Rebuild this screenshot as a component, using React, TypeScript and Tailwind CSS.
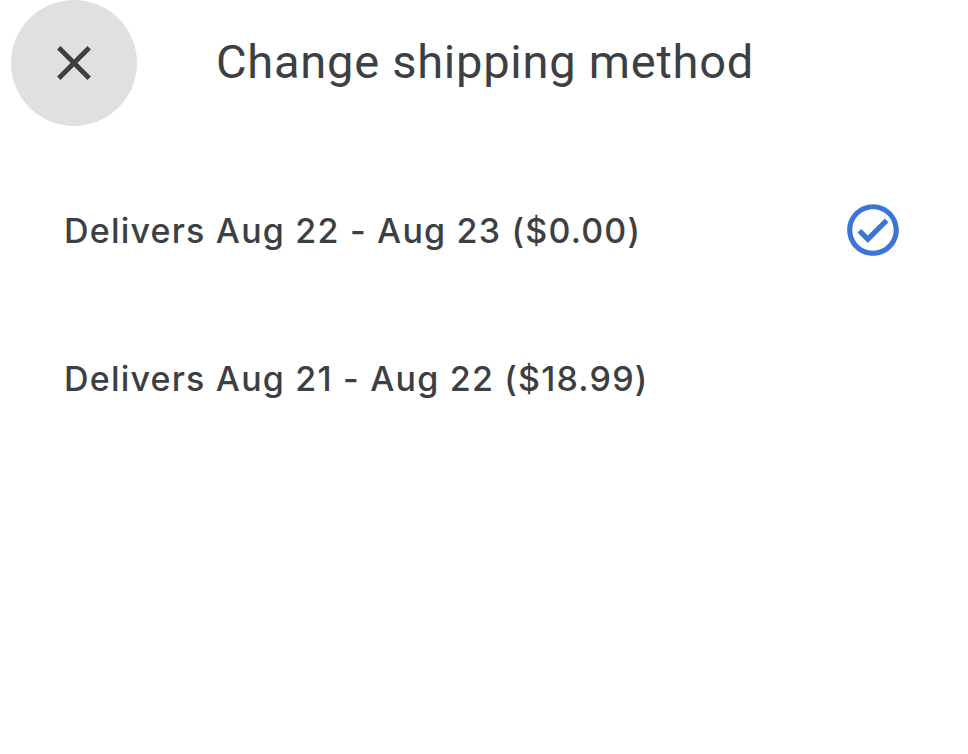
import React from "react";

const options = [
  { label: "Delivers Aug 22 - Aug 23 ($0.00)", selected: true },
  { label: "Delivers Aug 21 - Aug 22 ($18.99)", selected: false },
];

function CheckCircle() {
  return (
    <svg width="62" height="62" viewBox="0 0 24 24" fill="#3a76d6">
      <path d="M12 2C6.48 2 2 6.48 2 12s4.48 10 10 10 10-4.48 10-10S17.52 2 12 2zm0 18c-4.41 0-8-3.59-8-8s3.59-8 8-8 8 3.59 8 8-3.59 8-8 8zm4.59-12.42L10 14.17l-2.59-2.58L6 13l4 4 8-8z" />
    </svg>
  );
}

export default function App() {
  return (
    <div className="w-[968px] h-[754px] bg-white font-['Roboto',sans-serif] text-[#3c4043]">
      <div className="flex items-center pl-[11px]">
        <button className="w-[126px] h-[126px] rounded-full bg-[#e0e0e0] flex items-center justify-center">
          <svg width="58" height="58" viewBox="0 0 24 24" fill="#3c4043">
            <path d="M19 6.41L17.59 5 12 10.59 6.41 5 5 6.41 10.59 12 5 17.59 6.41 19 12 13.41 17.59 19 19 17.59 13.41 12z" />
          </svg>
        </button>
        <h1 className="ml-[79px] -mt-[4px] text-[47px] leading-none font-normal tracking-[0.75px]">
          Change shipping method
        </h1>
      </div>
      <div className="mt-[30px] flex flex-col">
        {options.map((o, idx) => (
          <div key={idx} className="h-[148px] flex items-center pl-[64px] pr-[64px] justify-between">
            <span className="font-['Inter',sans-serif] text-[34px] font-medium tracking-[1.2px]">{o.label}</span>
            {o.selected && <CheckCircle />}
          </div>
        ))}
      </div>
    </div>
  );
}
